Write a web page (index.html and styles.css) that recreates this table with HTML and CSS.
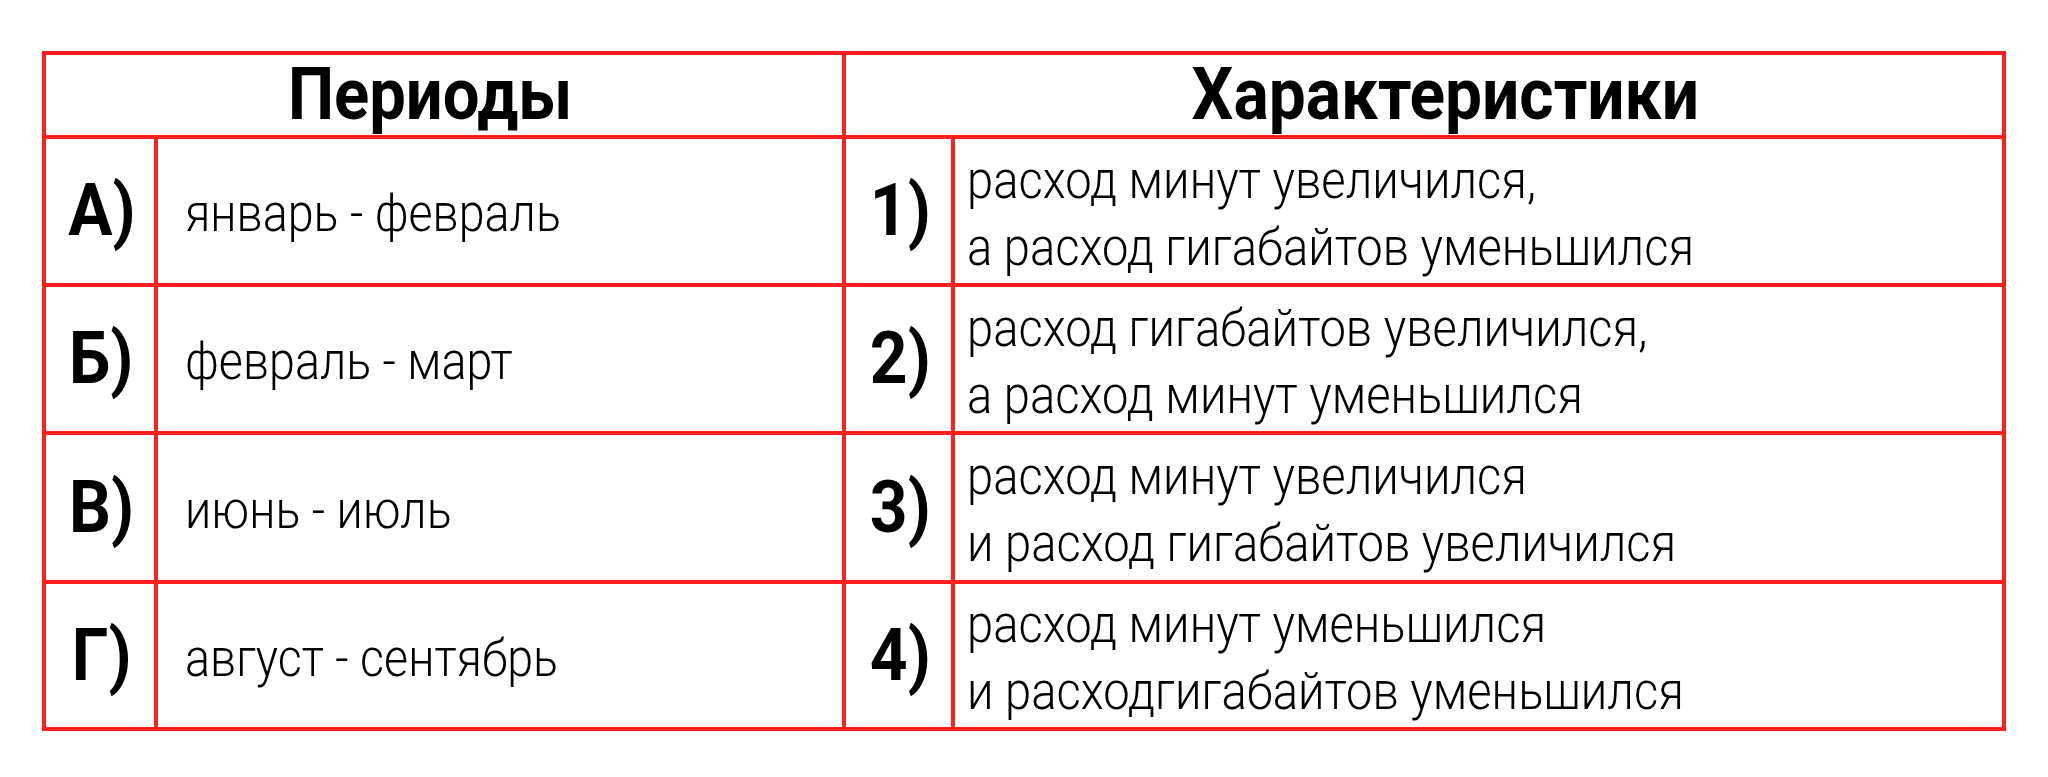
FILE: index.html
```html
<!DOCTYPE html>
<html lang="ru">
<head>
<meta charset="utf-8">
<title>Периоды и характеристики</title>
<link rel="stylesheet" href="styles.css">
</head>
<body>
<div class="page">
  <div class="table">
    <div class="head head-left"><span class="sq">Периоды</span></div>
    <div class="head head-right"><span class="sq">Характеристики</span></div>

    <div class="label"><span class="sq">А)</span></div>
    <div class="period"><span class="sq sq-left sq-period">январь - февраль</span></div>
    <div class="label"><span class="sq">1)</span></div>
    <div class="desc"><span class="sq sq-left">расход минут увеличился,<br>а расход гигабайтов уменьшился</span></div>

    <div class="label"><span class="sq">Б)</span></div>
    <div class="period"><span class="sq sq-left sq-period">февраль - март</span></div>
    <div class="label"><span class="sq">2)</span></div>
    <div class="desc"><span class="sq sq-left">расход гигабайтов увеличился,<br>а расход минут уменьшился</span></div>

    <div class="label"><span class="sq">В)</span></div>
    <div class="period"><span class="sq sq-left sq-period">июнь - июль</span></div>
    <div class="label"><span class="sq">3)</span></div>
    <div class="desc"><span class="sq sq-left">расход минут увеличился<br>и расход гигабайтов увеличился</span></div>

    <div class="label"><span class="sq">Г)</span></div>
    <div class="period"><span class="sq sq-left sq-period">август - сентябрь</span></div>
    <div class="label"><span class="sq">4)</span></div>
    <div class="desc"><span class="sq sq-left">расход минут уменьшился<br>и расходгигабайтов уменьшился</span></div>
  </div>
</div>
</body>
</html>
```

FILE: styles.css
```css
html, body {
  margin: 0;
  padding: 0;
  background: #ffffff;
}

.page {
  padding: 51px 0 0 42px;
}

.table {
  display: grid;
  grid-template-columns: 108px 684px 105px 1047px;
  grid-template-rows: 80px 144px 144px 145px 143px;
  gap: 4px;
  padding: 4px;
  width: 1956px;
  background: #ff1f1f;
  font-family: Roboto, "Liberation Sans", sans-serif;
  color: #000000;
}

.table > div {
  background: #ffffff;
  display: flex;
  align-items: center;
}

.head {
  grid-column: span 2;
  justify-content: center;
  align-items: flex-start;
  font-weight: 700;
  font-size: 72px;
  line-height: 70px;
}

.head-left {
  padding-right: 27px;
}

.head-right {
  padding-left: 42px;
}

.head-left .sq {
  transform: scaleX(0.905);
}

.label {
  justify-content: center;
  font-weight: 700;
  font-size: 72px;
  line-height: 72px;
  padding-left: 3px;
}

.period,
.desc {
  font-family: "Roboto Light", Roboto, "Liberation Sans", sans-serif;
  font-weight: 300;
  font-size: 51px;
  line-height: 67px;
  padding-top: 5px;
}

.period {
  padding-left: 27px;
}

.desc {
  padding-left: 12px;
}

.sq {
  display: inline-block;
  white-space: nowrap;
  transform: scaleX(0.915);
  transform-origin: center center;
}

.sq-left {
  transform: scaleX(0.925);
  transform-origin: left center;
}

.sq-period {
  transform: scaleX(0.915);
}
```
